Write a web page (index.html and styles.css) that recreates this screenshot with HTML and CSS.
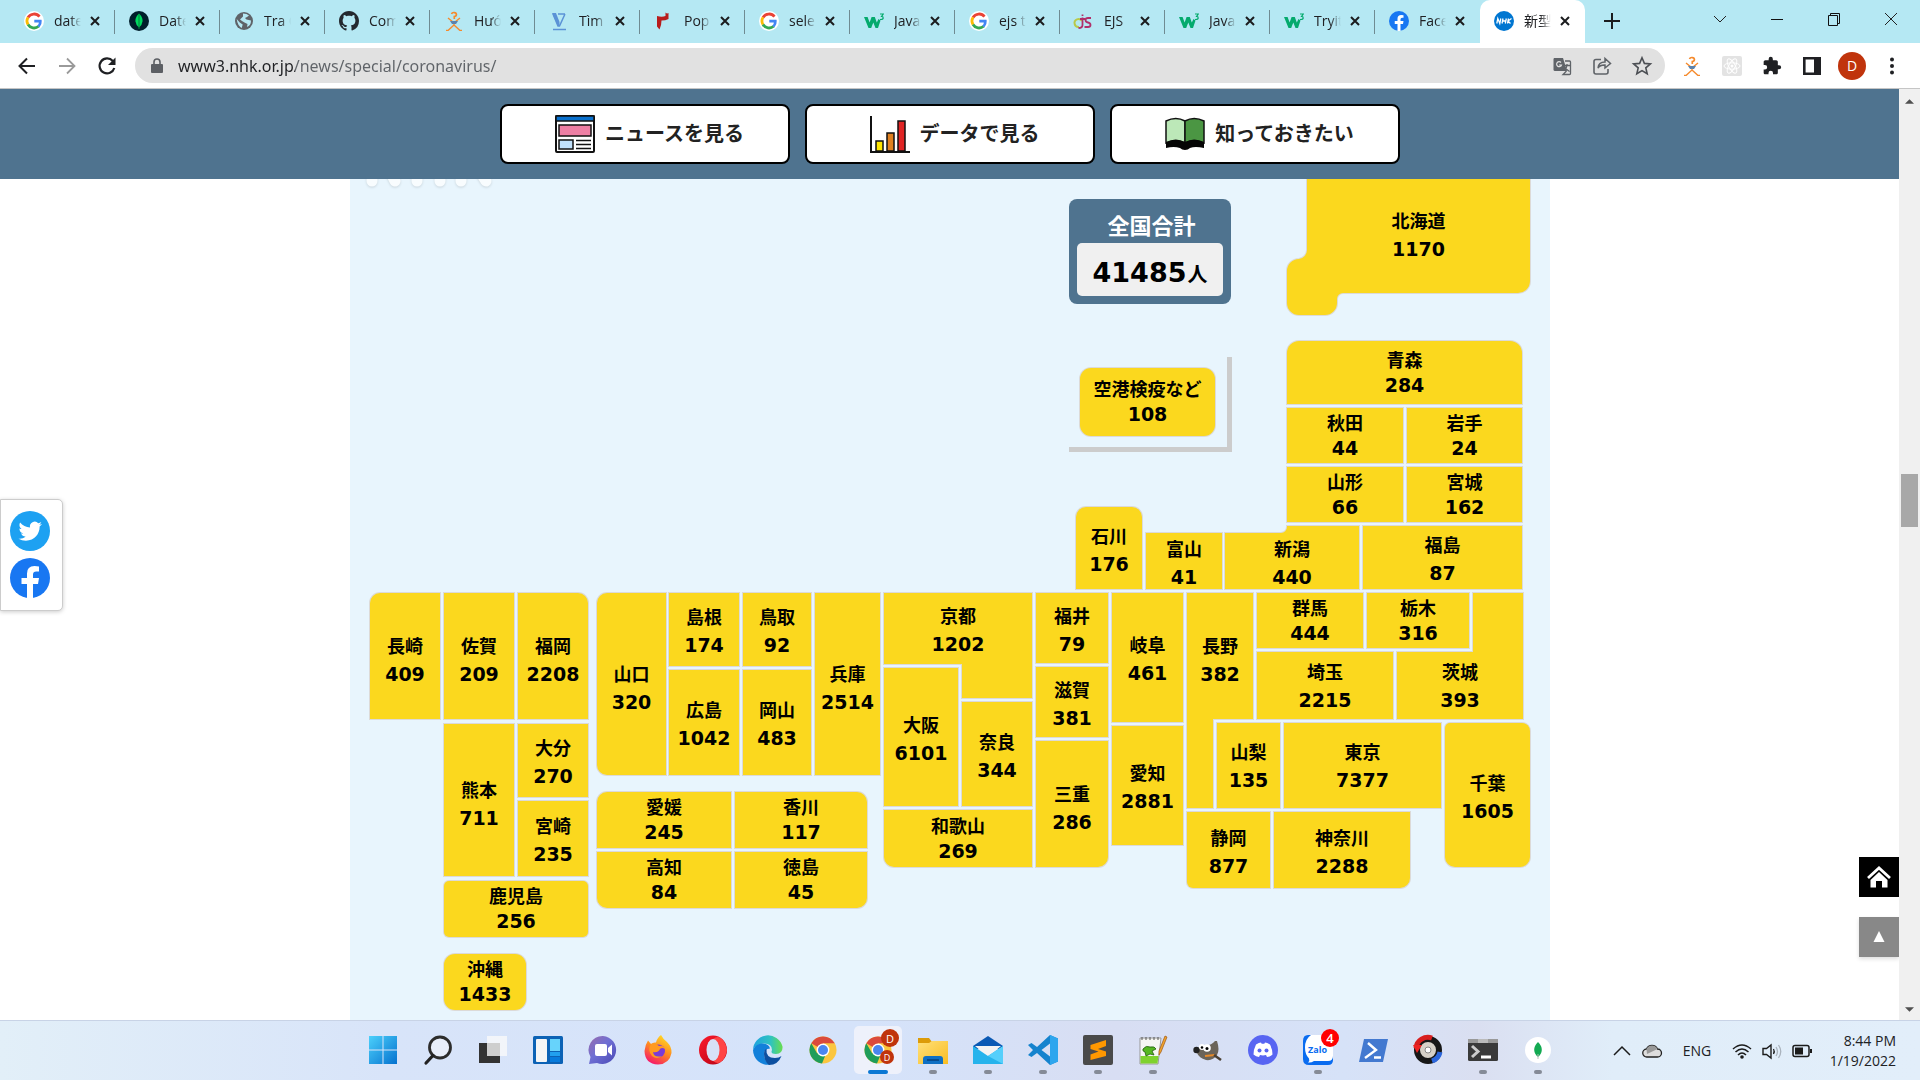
FILE: index.html
```html
<!DOCTYPE html>
<html lang="ja">
<head>
<meta charset="utf-8">
<title>新型コロナウイルス</title>
<meta name="viewport" content="width=device-width, initial-scale=1">
<link rel="stylesheet" href="styles.css">
</head>
<body>
<svg class="defs" aria-hidden="true">
  <defs>
    <linearGradient id="g-win" x1="0" y1="0" x2="1" y2="1"><stop offset="0" stop-color="#4cd0fb"/><stop offset="1" stop-color="#0572cf"/></linearGradient>
    <linearGradient id="g-edge" x1="0" y1="0" x2="1" y2="0"><stop offset="0" stop-color="#1fa2e0"/><stop offset=".6" stop-color="#2fc3c0"/><stop offset="1" stop-color="#68dd4e"/></linearGradient>
    <linearGradient id="g-fox" x1=".8" y1="0" x2=".3" y2="1"><stop offset="0" stop-color="#ffe226"/><stop offset=".5" stop-color="#ff8a1f"/><stop offset="1" stop-color="#f5156c"/></linearGradient>
    <linearGradient id="g-chat" x1="0" y1="0" x2="1" y2="1"><stop offset="0" stop-color="#9a6cab"/><stop offset=".45" stop-color="#6f6fd4"/><stop offset="1" stop-color="#4a49b5"/></linearGradient>
    <linearGradient id="g-folder" x1="0" y1="0" x2="1" y2="1"><stop offset="0" stop-color="#ffe07a"/><stop offset="1" stop-color="#f9bd22"/></linearGradient>
    <linearGradient id="g-opera" x1="0" y1="0" x2="1" y2="1"><stop offset="0" stop-color="#ff1b2d"/><stop offset="1" stop-color="#b00012"/></linearGradient>
    <symbol id="close" viewBox="0 0 12 12"><path d="M2 2l8 8M10 2l-8 8" stroke="#1b1c1e" stroke-width="2" fill="none"/></symbol>
    <symbol id="google" viewBox="0 0 20 20"><circle cx="10" cy="10" r="10" fill="#fff"/><path d="M15.500 5.600A7 7 0 0 0 4 6.500" stroke="#ea4335" stroke-width="2.800" fill="none"/><path d="M4 6.400a7 7 0 0 0 0 7.200" stroke="#fbbc05" stroke-width="2.800" fill="none"/><path d="M4 13.500a7 7 0 0 0 10.600 1.800" stroke="#34a853" stroke-width="2.800" fill="none"/><path d="M14.400 15.400A6.500 6.500 0 0 0 16.300 10.100H10.300" stroke="#4285f4" stroke-width="2.800" fill="none"/></symbol>
    <symbol id="w3" viewBox="0 0 20 20"><path d="M0 6h3.600l2 5.500L7.600 6h3.200l2 5.500L14.500 8l2 1.500-2.500 7.500h-2.500L9.300 11.500 7.200 17H4.500z" fill="#04aa6d"/><path d="M16 3h3.200l-1.600 2.300q1.600 0 1.600 1.600T16 8.500" stroke="#04aa6d" stroke-width="1.200" fill="none"/></symbol>
    <symbol id="stick" viewBox="0 0 20 20"><path d="M7.500 3a2.500 2 0 1 1 2.800 2.500V8" stroke="#f58a2c" stroke-width="1.700" fill="none"/><path d="M4 7l5 4h2l5-4M10 11v3l-6 5.500H2M10 14l6 5.500h2" stroke="#f58a2c" stroke-width="1.400" fill="none"/><path d="M6 10h8l-2 3H8z" fill="#5b83ad"/></symbol>
    <symbol id="fb" viewBox="0 0 40 40"><circle cx="20" cy="20" r="20" fill="#1877f2"/><path d="M17 40V26h-5.500v-6H17v-4.500Q17 8 24.500 8q2.500 0 4.500.4v5h-2.800Q23 13.400 23 16.500V20h6l-1 6h-5v14z" fill="#fff"/></symbol>
    <symbol id="chrome" viewBox="0 0 30 30"><circle cx="15" cy="15" r="13.500" fill="#fbc63f"/><path d="M15 15L3.300 8.200A13.500 13.500 0 0 1 26.700 8.200H15z" fill="#db4a3c"/><path d="M3.300 8.200L9.200 18.400 15 15l2 6.200-3 7.300A13.500 13.500 0 0 1 3.300 8.200z" fill="#1f9d5a"/><circle cx="15" cy="15" r="6.400" fill="#fff"/><circle cx="15" cy="15" r="5" fill="#4a86f0"/></symbol>
  </defs>
</svg>

<header class="browser">
  <div class="tabstrip">
    <nav class="tabs" aria-label="Tabs">
      <div class="tab"><svg class="fav"><use href="#google"/></svg><a class="tab-title" href="#">date</a><button class="tab-close" aria-label="Close"><svg><use href="#close"/></svg></button></div>
      <div class="tab"><svg class="fav" viewBox="0 0 20 20"><circle cx="10" cy="10" r="10" fill="#001e2b"/><path d="M10 2.500q4 4 3.500 8-.5 4-3.500 6-3-2-3.500-6-.5-4 3.500-8z" fill="#00d95f"/><path d="M10 3v15" stroke="#00833a"/></svg><a class="tab-title" href="#">Date</a><button class="tab-close" aria-label="Close"><svg><use href="#close"/></svg></button></div>
      <div class="tab"><svg class="fav" viewBox="0 0 20 20"><circle cx="10" cy="10" r="9" fill="#5f6368"/><path d="M9 2.500q4 0 6 2l-2 1.500-2 1 1.500 1.500 4.500 1q0 5-4 6.500l.5-3-3-1.500L8 10 6 8.500l3-3zM2.700 8l3 3.500 3 2-1 3.500Q3.500 14.500 2.700 8z" fill="#b5e8f3"/></svg><a class="tab-title" href="#">Tra C</a><button class="tab-close" aria-label="Close"><svg><use href="#close"/></svg></button></div>
      <div class="tab"><svg class="fav" viewBox="0 0 16 16"><path fill="#24292f" d="M8 0C3.580 0 0 3.580 0 8c0 3.540 2.290 6.530 5.470 7.590.4.070.55-.17.55-.38 0-.19-.01-.82-.01-1.490-2.010.37-2.530-.49-2.690-.94-.09-.23-.48-.94-.82-1.130-.28-.15-.68-.52-.01-.53.63-.01 1.080.58 1.230.82.72 1.210 1.870.87 2.330.66.070-.52.28-.87.51-1.070-1.780-.2-3.640-.89-3.640-3.950 0-.87.31-1.590.82-2.150-.08-.2-.36-1.020.08-2.120 0 0 .67-.21 2.200.82.64-.18 1.320-.27 2-.27s1.360.09 2 .27c1.530-1.040 2.200-.82 2.200-.82.44 1.100.16 1.920.08 2.120.51.56.82 1.270.82 2.150 0 3.070-1.870 3.750-3.650 3.950.29.25.54.73.54 1.480 0 1.070-.01 1.930-.01 2.200 0 .21.15.46.55.38A8.010 8.010 0 0 0 16 8c0-4.420-3.580-8-8-8z"/></svg><a class="tab-title" href="#">Com</a><button class="tab-close" aria-label="Close"><svg><use href="#close"/></svg></button></div>
      <div class="tab"><svg class="fav"><use href="#stick"/></svg><a class="tab-title" href="#">Hướ</a><button class="tab-close" aria-label="Close"><svg><use href="#close"/></svg></button></div>
      <div class="tab"><svg class="fav" viewBox="0 0 20 20"><path d="M4 3l5 12h1.500L16 3M9 3h7M4 18.500h13" stroke="#5b92d6" stroke-width="1.500" fill="none"/><path d="M3 2h4l3.500 9v4H9z" fill="#5b92d6"/></svg><a class="tab-title" href="#">Tìm</a><button class="tab-close" aria-label="Close"><svg><use href="#close"/></svg></button></div>
      <div class="tab"><svg class="fav" viewBox="0 0 20 20"><path d="M3 5q5 1.500 8.500 0V1.500q1.500 1.500 3 .5v6q-3 1.500-7 1.500 0 5-2 9L3 15.500z" fill="#b81c1c"/></svg><a class="tab-title" href="#">Pop</a><button class="tab-close" aria-label="Close"><svg><use href="#close"/></svg></button></div>
      <div class="tab"><svg class="fav"><use href="#google"/></svg><a class="tab-title" href="#">sele</a><button class="tab-close" aria-label="Close"><svg><use href="#close"/></svg></button></div>
      <div class="tab"><svg class="fav"><use href="#w3"/></svg><a class="tab-title" href="#">Java</a><button class="tab-close" aria-label="Close"><svg><use href="#close"/></svg></button></div>
      <div class="tab"><svg class="fav"><use href="#google"/></svg><a class="tab-title" href="#">ejs t</a><button class="tab-close" aria-label="Close"><svg><use href="#close"/></svg></button></div>
      <div class="tab"><svg class="fav" viewBox="0 0 20 20"><path d="M8 10a4 4 0 1 0-3 6" stroke="#b9c94a" stroke-width="2" fill="none"/><path d="M8.500 3.500v1.500M8.500 6.500V14q0 3-4 3M17 7h-3q-2.500 0-2.500 2t2.500 2.500 2.500 2.500-2.500 2h-3.500M6 8h5" stroke="#b0306a" stroke-width="1.800" fill="none"/></svg><a class="tab-title" href="#">EJS</a><button class="tab-close" aria-label="Close"><svg><use href="#close"/></svg></button></div>
      <div class="tab"><svg class="fav"><use href="#w3"/></svg><a class="tab-title" href="#">Java</a><button class="tab-close" aria-label="Close"><svg><use href="#close"/></svg></button></div>
      <div class="tab"><svg class="fav"><use href="#w3"/></svg><a class="tab-title" href="#">Tryit</a><button class="tab-close" aria-label="Close"><svg><use href="#close"/></svg></button></div>
      <div class="tab before-active"><svg class="fav"><use href="#fb"/></svg><a class="tab-title" href="#">Face</a><button class="tab-close" aria-label="Close"><svg><use href="#close"/></svg></button></div>
      <div class="tab active"><svg class="fav" viewBox="0 0 20 20"><circle cx="10" cy="10" r="10" fill="#0076d1"/><path d="M2.800 12.500l1-5 2 5 1-5M8 12.500l1-5M11.300 12.500l1-5M8.500 10h3.200M13.500 12.500l1-5M17.500 7.500L14 10l2.500 2.500" stroke="#fff" stroke-width="1.300" fill="none"/></svg><a class="tab-title" href="#" aria-current="page">新型</a><button class="tab-close" aria-label="Close"><svg><use href="#close"/></svg></button></div>
      <button class="new-tab" aria-label="New tab"><svg viewBox="0 0 16 16"><path d="M8 0v16M0 8h16" stroke="#1b1c1e" stroke-width="2"/></svg></button>
    </nav>
    <div class="window-controls">
      <button aria-label="Search tabs"><svg viewBox="0 0 14 14"><path d="M1 4l6 6 6-6" stroke="#222" fill="none"/></svg></button>
      <button aria-label="Minimize"><svg viewBox="0 0 14 14"><path d="M1 7.500h12" stroke="#111"/></svg></button>
      <button aria-label="Restore"><svg viewBox="0 0 14 14"><path d="M1.500 3.500h9v10h-9zM3.500 3.500v-2h9v10h-2" stroke="#111" fill="none"/></svg></button>
      <button aria-label="Close window"><svg viewBox="0 0 14 14"><path d="M1 1l12 12M13 1L1 13" stroke="#222"/></svg></button>
    </div>
  </div>
  <div class="toolbar">
    <button class="tool" aria-label="Back"><svg viewBox="0 0 20 20"><path d="M18 10H3M10 2.500L2.500 10l7.500 7.500" stroke="#1f2023" stroke-width="2" fill="none"/></svg></button>
    <button class="tool" aria-label="Forward"><svg viewBox="0 0 20 20"><path d="M2 10h15M10 2.500l7.500 7.500-7.500 7.500" stroke="#9a9a9a" stroke-width="1.800" fill="none"/></svg></button>
    <button class="tool" aria-label="Reload"><svg viewBox="0 0 20 20"><path d="M15.800 5A7.500 7.500 0 1 0 17.300 12" stroke="#1f2023" stroke-width="2.200" fill="none"/><path d="M18.500 1.500v7.500H11z" fill="#1f2023"/></svg></button>
    <div class="omnibox">
      <svg class="lock" viewBox="0 0 12 16"><rect x="0" y="6" width="12" height="9" rx="1" fill="#5c5f64"/><path d="M3 6V4a3 3 0 0 1 6 0v2" stroke="#5c5f64" stroke-width="1.600" fill="none"/></svg>
      <input class="url" type="text" aria-label="Address" value="www3.nhk.or.jp/news/special/coronavirus/">
      <button class="tool" aria-label="Translate"><svg viewBox="0 0 20 20"><path d="M2 2h9l4 13H3q-1.500 0-1.500-1.500V3z" fill="#5f6368"/><path d="M13 5h4.500q1 0 1 1v11.500q0 1-1 1H11l3.500-3.500M12 9.500h6M15 8v1.500q-.5 3.500-3 5M13.500 11.500q1 2.500 4 4" stroke="#5f6368" stroke-width="1.300" fill="none"/><path d="M9 6.500a2.500 2.500 0 1 0 .5 2.500H7" stroke="#e1e1e1" stroke-width="1.200" fill="none"/></svg></button>
      <button class="tool" aria-label="Share"><svg viewBox="0 0 20 20"><path d="M9 3.500H4q-2 0-2 2V16q0 2 2 2h10q2 0 2-2v-3" stroke="#5f6368" stroke-width="1.600" fill="none"/><path d="M6 12q.5-6 7-6V2.500L18.500 7.500 13 12V9q-5-.2-7 3z" stroke="#5f6368" stroke-width="1.500" fill="none"/></svg></button>
      <button class="tool" aria-label="Bookmark"><svg viewBox="0 0 20 20"><path d="M10 1.800l2.400 5.600 6 .5-4.600 4 1.400 5.900L10 14.600l-5.200 3.200 1.400-5.900-4.600-4 6-.5z" stroke="#4c4f54" stroke-width="1.600" fill="none"/></svg></button>
    </div>
    <div class="extensions">
      <button class="tool" aria-label="Extension"><svg><use href="#stick"/></svg></button>
      <button class="tool" aria-label="React tools"><svg viewBox="0 0 20 20"><rect width="20" height="20" rx="2" fill="#e3e3e3"/><g stroke="#fff" fill="none"><ellipse cx="10" cy="10" rx="8" ry="3.200"/><ellipse cx="10" cy="10" rx="8" ry="3.200" transform="rotate(60 10 10)"/><ellipse cx="10" cy="10" rx="8" ry="3.200" transform="rotate(120 10 10)"/></g><circle cx="10" cy="10" r="1.500" fill="#fff"/></svg></button>
      <button class="tool" aria-label="Extensions"><svg viewBox="0 0 24 24"><path fill="#1f2023" d="M20.500 11H19V7c0-1.100-.9-2-2-2h-4V3.500a2.500 2.500 0 0 0-5 0V5H4c-1.100 0-2 .9-2 2v3.800h1.500a2.700 2.700 0 0 1 0 5.400H2V20c0 1.100.9 2 2 2h3.800v-1.500a2.700 2.700 0 0 1 5.400 0V22H17c1.100 0 2-.9 2-2v-4h1.500a2.500 2.500 0 0 0 0-5z"/></svg></button>
      <button class="tool" aria-label="Side panel"><svg viewBox="0 0 20 20"><path d="M2.300 2.300h15.400v15.400H2.300z" stroke="#1f2023" stroke-width="2.600" fill="none"/><path d="M12 2h6v16h-6z" fill="#1f2023"/></svg></button>
      <button class="avatar">D</button>
      <button class="tool" aria-label="Menu"><svg viewBox="0 0 20 20"><circle cx="10" cy="3.500" r="2" fill="#1f2023"/><circle cx="10" cy="10" r="2" fill="#1f2023"/><circle cx="10" cy="16.500" r="2" fill="#1f2023"/></svg></button>
    </div>
  </div>
</header>

<div class="window">
  <div class="page">
    <nav class="site-nav">
      <a class="nav-button" href="#"><svg viewBox="0 0 40 38"><rect x="1" y="1" width="38" height="36" rx="1" fill="#fff" stroke="#111" stroke-width="2"/><path d="M1 1h38v5H1z" fill="#0a71ce" stroke="#111" stroke-width="1.500"/><rect x="4" y="10" width="32" height="11" fill="#ee7fa4" stroke="#111" stroke-width="1.500"/><rect x="4" y="25" width="14" height="9" fill="#bfe0fb" stroke="#111" stroke-width="1.500"/><path d="M21 25.500h15M21 29.500h15M21 33.500h15" stroke="#111" stroke-width="1.500"/></svg>ニュースを見る</a>
      <a class="nav-button" href="#"><svg viewBox="0 0 40 38"><path d="M1 1v36h39" stroke="#111" stroke-width="2" fill="none"/><rect x="6" y="26" width="7" height="10" fill="#ffe600" stroke="#111" stroke-width="1.500"/><rect x="17" y="18" width="7" height="18" fill="#e08020" stroke="#111" stroke-width="1.500"/><rect x="28" y="6" width="7" height="30" fill="#e02424" stroke="#111" stroke-width="1.500"/></svg>データで見る</a>
      <a class="nav-button" href="#"><svg viewBox="0 0 40 38"><path d="M1 6q10-5 19 0v22q-9-4-19 0z" fill="#bce8b8" stroke="#111" stroke-width="1.500"/><path d="M39 6q-10-5-19 0v22q9-4 19 0z" fill="#4b9643" stroke="#111" stroke-width="1.500"/><path d="M1 27q10-5 19 0 9-5 19 0v6q-9-2-14 0-2 2-5 2t-5-2q-6-2-14 0z" fill="#050505"/></svg>知っておきたい</a>
    </nav>
    <main class="map">
      <svg class="map-shapes" viewBox="0 0 1200 841" aria-hidden="true">
        <g class="watermark"><path d="M22 -8V2M40 -8l5 10M67 -8V2M90 -8V2M111 -8V2M131 -6l5 8"/></g>
        <g class="land">
          <path d="M957 -10V71a9 9 0 0 1-8 9a12 12 0 0 0-12 12v32a12 12 0 0 0 12 12h26a12 12 0 0 0 12-12v-4a6 6 0 0 1 6-6h175a12 12 0 0 0 12-12V-10z"/>
          <path d="M534 414h148v105h-70v-34h-78z"/>
          <path d="M837 414h66v126h-40v89h-26z"/>
          <path d="M1123 414h50v126h-126v-67h76z"/>
          <path d="M875 354h56a6 6 0 0 0 6-6v-1h72v63H875z"/>
        </g>
      </svg>
      <section class="total"><h2>全国合計</h2><p><strong>41485</strong>人</p></section>
      <div class="bracket"></div>
      <a href="#" class="tile low airport"><span>空港検疫など</span><b>108</b></a>
      <a href="#" class="tile shape hokkaido"><span>北海道</span><b>1170</b></a>
      <a href="#" class="tile low aomori"><span>青森</span><b>284</b></a>
      <a href="#" class="tile low akita"><span>秋田</span><b>44</b></a>
      <a href="#" class="tile low iwate"><span>岩手</span><b>24</b></a>
      <a href="#" class="tile low yamagata"><span>山形</span><b>66</b></a>
      <a href="#" class="tile low miyagi"><span>宮城</span><b>162</b></a>
      <a href="#" class="tile ishikawa"><span>石川</span><b>176</b></a>
      <a href="#" class="tile toyama"><span>富山</span><b>41</b></a>
      <a href="#" class="tile shape niigata"><span>新潟</span><b>440</b></a>
      <a href="#" class="tile fukushima"><span>福島</span><b>87</b></a>
      <a href="#" class="tile west nagasaki"><span>長崎</span><b>409</b></a>
      <a href="#" class="tile west saga"><span>佐賀</span><b>209</b></a>
      <a href="#" class="tile west fukuoka"><span>福岡</span><b>2208</b></a>
      <a href="#" class="tile west kumamoto"><span>熊本</span><b>711</b></a>
      <a href="#" class="tile oita"><span>大分</span><b>270</b></a>
      <a href="#" class="tile miyazaki"><span>宮崎</span><b>235</b></a>
      <a href="#" class="tile low kagoshima"><span>鹿児島</span><b>256</b></a>
      <a href="#" class="tile low okinawa"><span>沖縄</span><b>1433</b></a>
      <a href="#" class="tile west yamaguchi"><span>山口</span><b>320</b></a>
      <a href="#" class="tile shimane"><span>島根</span><b>174</b></a>
      <a href="#" class="tile tottori"><span>鳥取</span><b>92</b></a>
      <a href="#" class="tile hiroshima"><span>広島</span><b>1042</b></a>
      <a href="#" class="tile okayama"><span>岡山</span><b>483</b></a>
      <a href="#" class="tile west hyogo"><span>兵庫</span><b>2514</b></a>
      <a href="#" class="tile low ehime"><span>愛媛</span><b>245</b></a>
      <a href="#" class="tile low kagawa"><span>香川</span><b>117</b></a>
      <a href="#" class="tile low kochi"><span>高知</span><b>84</b></a>
      <a href="#" class="tile low tokushima"><span>徳島</span><b>45</b></a>
      <a href="#" class="tile shape kyoto"><span>京都</span><b>1202</b></a>
      <a href="#" class="tile osaka"><span>大阪</span><b>6101</b></a>
      <a href="#" class="tile nara"><span>奈良</span><b>344</b></a>
      <a href="#" class="tile low wakayama"><span>和歌山</span><b>269</b></a>
      <a href="#" class="tile fukui"><span>福井</span><b>79</b></a>
      <a href="#" class="tile shiga"><span>滋賀</span><b>381</b></a>
      <a href="#" class="tile west mie"><span>三重</span><b>286</b></a>
      <a href="#" class="tile gifu"><span>岐阜</span><b>461</b></a>
      <a href="#" class="tile aichi"><span>愛知</span><b>2881</b></a>
      <a href="#" class="tile shape west nagano"><span>長野</span><b>382</b></a>
      <a href="#" class="tile low gunma"><span>群馬</span><b>444</b></a>
      <a href="#" class="tile low tochigi"><span>栃木</span><b>316</b></a>
      <a href="#" class="tile flat saitama"><span>埼玉</span><b>2215</b></a>
      <a href="#" class="tile flat shape ibaraki"><span>茨城</span><b>393</b></a>
      <a href="#" class="tile flat yamanashi"><span>山梨</span><b>135</b></a>
      <a href="#" class="tile flat tokyo"><span>東京</span><b>7377</b></a>
      <a href="#" class="tile chiba"><span>千葉</span><b>1605</b></a>
      <a href="#" class="tile shizuoka"><span>静岡</span><b>877</b></a>
      <a href="#" class="tile kanagawa"><span>神奈川</span><b>2288</b></a>
    </main>
    <aside class="share">
      <a href="#" aria-label="Twitter"><svg viewBox="0 0 40 40"><circle cx="20" cy="20" r="20" fill="#1da1f2"/><path fill="#fff" transform="translate(8.500 8.500) scale(.98)" d="M23.950 4.570a10 10 0 0 1-2.820.780 4.960 4.960 0 0 0 2.160-2.730 9.900 9.900 0 0 1-3.120 1.190 4.920 4.920 0 0 0-8.380 4.480C7.690 8.090 4.070 6.130 1.640 3.160a4.820 4.820 0 0 0-.67 2.480c0 1.710.87 3.210 2.190 4.100a4.900 4.900 0 0 1-2.230-.62v.06a4.920 4.920 0 0 0 3.950 4.830 5 5 0 0 1-2.210.08 4.940 4.940 0 0 0 4.600 3.420A9.870 9.870 0 0 1 0 19.540a14 14 0 0 0 7.550 2.210c9.050 0 14-7.500 14-13.980 0-.21 0-.42-.02-.63a9.940 9.940 0 0 0 2.460-2.550z"/></svg></a>
      <a href="#" aria-label="Facebook"><svg><use href="#fb"/></svg></a>
    </aside>
    <div class="jump">
      <a class="home" href="#" aria-label="Home"><svg viewBox="0 0 24 22"><path d="M1 12L12 2l11 10" stroke="#fff" stroke-width="2.800" fill="none"/><path d="M12 6l8.500 8v7.500h-5.500V15H9v6.500H3.500V14z" fill="#fff"/></svg></a>
      <a class="top" href="#" aria-label="Top"><svg viewBox="0 0 24 22"><path d="M12 5l5.500 11h-11z" fill="#fff"/></svg></a>
    </div>
  </div>
  <div class="scrollbar">
    <svg viewBox="0 0 10 6"><path d="M0 6l5-5 5 5z" fill="#505050"/></svg>
    <span class="thumb"></span>
    <svg viewBox="0 0 10 6"><path d="M0 0l5 5 5-5z" fill="#505050"/></svg>
  </div>
</div>

<footer class="taskbar">
  <div class="apps">
    <button class="app" aria-label="Start"><svg viewBox="0 0 30 30"><path d="M1 1h13.500v13.500H1zM15.500 1H29v13.500H15.500zM1 15.500h13.500V29H1zM15.500 15.500H29V29H15.500z" fill="url(#g-win)"/></svg></button>
    <button class="app" aria-label="Search"><svg viewBox="0 0 30 30"><circle cx="17" cy="12.500" r="10.500" stroke="#2c2c2c" stroke-width="2.800" fill="#e8eefa"/><path d="M10 20.500L3 28" stroke="#222" stroke-width="3.200" stroke-linecap="round"/></svg></button>
    <button class="app" aria-label="Task view"><svg viewBox="0 0 30 30"><path d="M1 8h21v20H1z" fill="#333"/><path d="M9 1h20v20H9z" fill="#fafafa" opacity=".78"/></svg></button>
    <button class="app" aria-label="Widgets"><svg viewBox="0 0 30 30"><rect y="1" width="30" height="28" rx="1.500" fill="#0c62b5"/><rect x="3" y="4" width="11" height="23" rx="1" fill="#f5f5f5"/><rect x="17" y="4" width="10" height="12" fill="#67d3fb"/><path d="M17 17h10v4H17z" fill="#21a0ef"/><path d="M17 22h10v5H17z" fill="#087bdc"/></svg></button>
    <button class="app" aria-label="Chat"><svg viewBox="0 0 30 30"><path d="M15 1a14 14 0 1 1-6 27l-8 1 1.500-7A14 14 0 0 1 15 1z" fill="url(#g-chat)"/><rect x="7" y="9" width="12" height="12" rx="2" fill="#fff"/><path d="M20 13l4-3.500v11L20 17z" fill="#fff"/></svg></button>
    <button class="app" aria-label="Firefox"><svg viewBox="0 0 30 30"><path d="M18 0q2 4 6 7 5 5 4.500 11-2 11-13.500 11.500Q2 29 1.500 16 2 10 5 5.500L8 9q2-2 5-1.500Q14 3 18 0z" fill="url(#g-fox)"/><circle cx="15.500" cy="16" r="6.500" fill="#7a3bd8"/><path d="M8 9q5-1 8 2 5-1 6 3-3-2-5 0-2 4-7 3 1 6 9 4-5 4-10 0-5-6-1-12z" fill="#ff9a20"/></svg></button>
    <button class="app" aria-label="Opera"><svg viewBox="0 0 30 30"><ellipse cx="15" cy="15" rx="14" ry="14.500" fill="url(#g-opera)"/><path d="M15 4q5-4 9 0 4 4 5 11-1 7-5 11-4 4-9 0z" fill="#f44"/><ellipse cx="15" cy="15" rx="6.500" ry="11" fill="#d7e1f7"/></svg></button>
    <button class="app" aria-label="Edge"><svg viewBox="0 0 30 30"><path d="M0 15A15 15 0 0 1 29.500 11.500q.5 7-6.500 7.500-6 0-4-4 0-7-9-6.500Q2 10 0 15z" fill="url(#g-edge)"/><path d="M0 15Q3 8 10 8.500q6 .5 7 5-6 0-6 6 0 6 6 10.200A15 15 0 0 1 0 15z" fill="#1280da"/><path d="M11 19q0-4 2.500-5.500-1 9.500 8.500 9.500 4 0 6.500-2Q25 30 16 30q-5-4-5-11z" fill="#0c4fa0"/></svg></button>
    <button class="app" aria-label="Chrome"><svg><use href="#chrome"/></svg></button>
    <button class="app current" aria-label="Chrome profile"><svg><use href="#chrome"/></svg><span class="profile big">D</span><span class="profile small">D</span></button>
    <button class="app running" aria-label="Explorer"><svg viewBox="0 0 30 30"><path d="M0 3h11l3 4-3 5H0z" fill="#dc9b08"/><path d="M0 8h11l3-2h16v23H0z" fill="url(#g-folder)"/><path d="M5 29v-5q0-3 3-3h14q3 0 3 3v5z" fill="#0f70c4"/><path d="M9 25h12" stroke="#06417c" stroke-width="1.500"/></svg></button>
    <button class="app running" aria-label="Mail"><svg viewBox="0 0 30 30"><path d="M0 11L15 1l15 10v3H0z" fill="#0a59b4"/><path d="M2 11h26L15 22z" fill="#f3f3f3"/><path d="M0 11l15 10 15-10v18H0z" fill="#26b3ec"/><path d="M15 21l15-10v18z" fill="#55cffb"/></svg></button>
    <button class="app running" aria-label="VS Code"><svg viewBox="0 0 30 30"><path d="M22 0L9 12 3.500 8 0 10l5 5-5 5 3.500 2L9 18l13 12 8-3.500v-23zM22 8.500v13L13.500 15z" fill="#1583ce" fill-rule="evenodd"/><path d="M22 0l8 3.500v23L22 30z" fill="#2ea6ee"/></svg></button>
    <button class="app running" aria-label="Sublime Text"><svg viewBox="0 0 30 30"><rect width="30" height="30" rx="2" fill="#4a4a4a"/><path d="M7.500 10L23 5v6l-8 3 8 2.500V21L7.500 25v-5.500l8-3-8-2.500z" fill="#ff9800"/></svg></button>
    <button class="app running" aria-label="Notepad++"><svg viewBox="0 0 30 30"><path d="M2 3h21l-3 26H2z" fill="#f6f6f2" stroke="#999"/><path d="M2.500 21h18l-1 7.500h-17z" fill="#7fd22f"/><path d="M4 2v3M8 2v3M12 2v3M16 2v3M20 2v3" stroke="#555"/><path d="M5 14q3-4 7-2 5-1 6 2l-4 2 2 4-4-1-4 2-1-4q-3-1-2-3z" fill="#56b820" stroke="#225a10" stroke-width=".8"/><path d="M29 2l-6 15-2 3V16L27 1z" fill="#f2a52c" stroke="#9c5413" stroke-width=".7"/></svg></button>
    <button class="app" aria-label="GIMP"><svg viewBox="0 0 30 30"><path d="M3 13q6 1 9-2 7-1 10-5l2 0q3 9 0 14-4 6-11 5-7-2-9-7z" fill="#6b6459"/><circle cx="3.500" cy="15" r="3.200" fill="#222"/><circle cx="9" cy="12" r="3" fill="#fff"/><circle cx="14" cy="13" r="3.800" fill="#fff"/><circle cx="9" cy="12.500" r="1.300"/><circle cx="14" cy="13.500" r="1.500"/><path d="M12 21l10-1" stroke="#e58a2b" stroke-width="2"/><path d="M21 20l7 5" stroke="#4a4034" stroke-width="2.500"/></svg></button>
    <button class="app" aria-label="Discord"><svg viewBox="0 0 30 30"><circle cx="15" cy="15" r="15" fill="#5865f2"/><path d="M8 9.500q3-2 5-2l.7 1.300h2.600L17 7.500q2 0 5 2 2.500 5 2.500 10-2.500 2.300-5.500 2.500l-1-2q-3 .8-6 0l-1 2q-3-.2-5.500-2.500 0-5 2.500-10z" fill="#fff"/><circle cx="11.500" cy="15.500" r="2" fill="#5865f2"/><circle cx="18.500" cy="15.500" r="2" fill="#5865f2"/></svg></button>
    <button class="app running" aria-label="Zalo"><svg viewBox="0 0 30 30"><path d="M5 0h22q3 0 3 5v20q0 5-5 5H6q-6 0-6-6V6q0-6 5-6z" fill="#0a6cf0"/><path d="M8 0h19q3 0 3 5v16q0 5-5 5H11q-3 2-6 1.500 2-2 1-4-4-4-4-11Q2 4 8 0z" fill="#fff"/></svg><span class="zalo">Zalo</span><span class="badge">4</span></button>
    <button class="app" aria-label="PowerShell"><svg viewBox="0 0 30 30"><path d="M6 4h24l-5 23H1z" fill="#4379d0"/><path d="M10 8l8 7-11 8M16 22.500h7" stroke="#fff" stroke-width="2.400" fill="none"/></svg></button>
    <button class="app" aria-label="Converter"><svg viewBox="0 0 30 30"><circle cx="15" cy="15" r="11" stroke="#171717" stroke-width="6" fill="#d6d1c8"/><path d="M3 13a12 12 0 0 1 16-10" stroke="#d81e1e" stroke-width="5" fill="none"/><path d="M0 10h9l-5 8z" fill="#e22"/><path d="M27 17a12 12 0 0 1-8 9" stroke="#2b66dd" stroke-width="5" fill="none"/><circle cx="15" cy="15" r="3" fill="#fff" stroke="#888"/></svg></button>
    <button class="app running" aria-label="Terminal"><svg viewBox="0 0 30 30"><rect y="4" width="30" height="22" rx="1.500" fill="#3a3a3a"/><path d="M0 4h30v4H0z" fill="#999"/><path d="M10 4h10v4H10z" fill="#bbb"/><path d="M4 11l6 5.500L4 22" stroke="#ccc" stroke-width="3" fill="none"/><path d="M13 22h10" stroke="#fff" stroke-width="3"/></svg></button>
    <button class="app running" aria-label="MongoDB Compass"><svg viewBox="0 0 30 30"><circle cx="15" cy="15" r="13" fill="#fff"/><path d="M15 7q4 4 3.800 8T15 22q-3.600-3-3.800-7T15 7z" fill="#13aa52"/><path d="M15 19v5" stroke="#bbb"/></svg></button>
  </div>
  <div class="tray">
    <button aria-label="Hidden icons"><svg viewBox="0 0 20 20"><path d="M2 14l8-8 8 8" stroke="#1b1b1b" stroke-width="1.500" fill="none"/></svg></button>
    <button aria-label="OneDrive"><svg viewBox="0 0 20 20"><path d="M5 16a4 4 0 0 1-.5-8A6 6 0 0 1 15.500 8a4 4 0 0 1 0 8z" fill="#ddd" stroke="#222" stroke-width="1.300"/><path d="M4.500 8A6 6 0 0 1 15.500 8L5 13z" fill="#999"/></svg></button>
    <button class="lang">ENG</button>
    <button aria-label="Wi-Fi"><svg viewBox="0 0 20 20"><path d="M1 8q9-8 18 0M3.500 11q6.500-6 13 0M6 14q4-4 8 0" stroke="#1b1b1b" stroke-width="1.500" fill="none"/><circle cx="10" cy="16" r="1.800" fill="#1b1b1b"/></svg></button>
    <button aria-label="Volume"><svg viewBox="0 0 20 20"><path d="M1 7.500h3.500L9 4v13l-4.500-3.500H1z" stroke="#1b1b1b" stroke-width="1.400" fill="none"/><path d="M11.500 8q1.500 2.500 0 5" stroke="#1b1b1b" stroke-width="1.300" fill="none"/><path d="M14 6q3 4.500 0 9M16.500 4q4.500 6.500 0 13" stroke="#aab3bd" stroke-width="1.300" fill="none"/></svg></button>
    <button aria-label="Battery"><svg viewBox="0 0 20 20"><rect x="1" y="4.500" width="16" height="11" rx="2" stroke="#1b1b1b" stroke-width="1.500" fill="none"/><rect x="3" y="6.500" width="8" height="7" fill="#1b1b1b"/><path d="M18 8h2v4h-2z" fill="#1b1b1b"/></svg></button>
    <div class="clock"><time>8:44 PM</time><time>1/19/2022</time></div>
  </div>
</footer>
</body>
</html>
```
FILE: styles.css
```css
* { box-sizing: border-box; }
body {
  margin: 0;
  height: 100vh;
  display: flex;
  flex-direction: column;
  overflow: hidden;
  background: #fff;
  font-family: "Open Sans", "Noto Sans CJK JP", sans-serif;
  color: #202124;
}
button { border: 0; padding: 0; background: none; font: inherit; color: inherit; }
a { color: inherit; text-decoration: none; }
svg { display: block; overflow: visible; }
.defs { position: absolute; width: 0; height: 0; }

/* Browser frame */
.tabstrip { display: flex; justify-content: space-between; height: 43px; background: #b5e8f3; }
.tabs { display: flex; padding-left: 10px; min-width: 0; }
.tab {
  position: relative;
  display: flex;
  align-items: center;
  width: 105px;
  padding: 0 14px 2px 14px;
}
.tab::after { content: ""; position: absolute; right: 0; top: 10px; height: 24px; width: 1px; background: #6f8b92; }
.tab.before-active::after, .tab.active::after { display: none; }
.tab.active { background: #fff; border-radius: 10px 10px 0 0; }
.fav { width: 20px; height: 20px; flex: none; }
.tab-title {
  flex: 1;
  min-width: 0;
  margin: 0 8px 0 10px;
  overflow: hidden;
  white-space: nowrap;
  font-size: 14px;
  line-height: 22px;
  mask-image: linear-gradient(to right, #000 60%, transparent);
}
.tab-close svg { width: 12px; height: 12px; }
.new-tab { padding: 0 19px 2px; }
.new-tab svg { width: 16px; height: 16px; }
.window-controls { display: flex; padding-right: 1px; }
.window-controls button { width: 57px; display: grid; place-items: center; padding-bottom: 6px; }
.window-controls svg { width: 14px; height: 14px; }
.toolbar { display: flex; align-items: center; height: 46px; padding: 0 8px 0 7px; border-bottom: 1px solid #c5c5c5; }
.tool { width: 40px; height: 36px; display: grid; place-items: center; flex: none; }
.tool svg { width: 20px; height: 20px; }
.omnibox {
  flex: 1;
  display: flex;
  align-items: center;
  height: 35px;
  margin-left: 8px;
  padding: 0 3px 0 16px;
  border-radius: 18px;
  background: #e1e1e1;
}
.lock { width: 12px; height: 16px; flex: none; }
.url {
  flex: 1;
  min-width: 0;
  margin: 0 0 0 15px;
  padding: 0;
  border: 0;
  outline: 0;
  font-family: "Open Sans", sans-serif;
  font-size: 16px;
  color: transparent;
  background: linear-gradient(to right, #202124 117px, #5f6368 117px);
  background-clip: text;
}
.url { font-family: "Noto Sans", sans-serif; }
.extensions { display: flex; align-items: center; padding-left: 7px; }
.avatar { width: 28px; height: 28px; margin: 0 6px; border-radius: 50%; background: #c0340c; color: #fff; font-size: 14px; }

/* Page window */
.window { flex: 1; min-height: 0; display: flex; overflow: hidden; }
.page { position: relative; flex: 1; min-width: 0; overflow: hidden; }
.site-nav {
  position: relative;
  z-index: 1;
  display: flex;
  justify-content: center;
  gap: 15px;
  padding: 15px;
  background: #4f738f;
}
.nav-button {
  display: flex;
  align-items: center;
  justify-content: center;
  gap: 10px;
  width: 290px;
  height: 60px;
  padding-left: 10px;
  border: 2px solid #000;
  border-radius: 8px;
  background: #fff;
  font-size: 20px;
  line-height: 26px;
  font-weight: 600;
  color: #222;
}
.nav-button svg { width: 40px; height: 38px; }
.scrollbar {
  display: flex;
  flex-direction: column;
  align-items: center;
  justify-content: space-between;
  width: 21px;
  padding: 9px 0 7px;
  background: #f0f0f0;
}
.scrollbar svg { width: 9px; height: 6px; }
.thumb { width: 17px; height: 53px; margin-bottom: 110px; background: #a8a8a8; }

/* Case map */
.map {
  position: relative;
  width: 1200px;
  height: 841px;
  margin: 0 auto;
  margin-left: round(up, calc(50% - 600px), 1px);
  background: #e8f5fd;
}
.map-shapes { position: absolute; inset: 0; width: 1200px; height: 841px; }
.land { fill: #fbd81e; stroke: #dcdad8; stroke-width: 2px; paint-order: stroke; }
.watermark { fill: none; stroke: #f8fcfe; stroke-width: 11px; stroke-linecap: round; filter: drop-shadow(0 1px 1px #c9d5dc); }
.tile {
  position: absolute;
  display: flex;
  flex-direction: column;
  align-items: center;
  justify-content: center;
  padding-top: 3px;
  background: #fbd81e;
  box-shadow: 0 0 0 1px #dcdad8;
  color: #000;
  font-size: 18px;
  line-height: 28px;
  font-weight: 600;
  white-space: nowrap;
}
.tile b { font-family: "DejaVu Sans", sans-serif; font-size: 19px; }
.tile.west { padding-top: 7px; }
.tile.low { line-height: 25px; padding-top: 0; }
.tile.flat { padding-top: 0; }
.tile.shape { background: none; box-shadow: none; }
.total {
  position: absolute;
  left: 719px; top: 20px; width: 162px; height: 105px;
  padding: 8px;
  border-radius: 8px;
  background: #4f738f;
  text-align: center;
}
.total h2 { margin: 0; padding-left: 3px; font-size: 22px; line-height: 36px; font-weight: 700; color: #fff; }
.total p { margin: 0; height: 53px; line-height: 60px; border-radius: 5px; background: #f0f0f0; color: #000; font-size: 20px; font-weight: 600; }
.total strong { margin-right: 1px; font-family: "DejaVu Sans", sans-serif; font-size: 27px; }
.bracket { position: absolute; left: 719px; top: 178px; width: 163px; height: 95px; border: solid #ccc; border-width: 0 5px 5px 0; }

.airport { left: 730px; top: 189px; width: 135px; height: 68px; border-radius: 11px; }
.hokkaido { left: 957px; top: 0; width: 223px; height: 108px; }
.aomori { left: 937px; top: 162px; width: 235px; height: 63px; border-radius: 12px 12px 0 0; }
.akita { left: 937px; top: 229px; width: 116px; height: 55px; }
.iwate { left: 1057px; top: 229px; width: 115px; height: 55px; }
.yamagata { left: 937px; top: 288px; width: 116px; height: 55px; }
.miyagi { left: 1057px; top: 288px; width: 115px; height: 55px; }
.ishikawa { left: 726px; top: 328px; width: 66px; height: 82px; border-radius: 10px 10px 0 0; }
.toyama { left: 796px; top: 354px; width: 76px; height: 56px; }
.niigata { left: 875px; top: 354px; width: 134px; height: 56px; }
.fukushima { left: 1013px; top: 347px; width: 159px; height: 63px; }
.nagasaki { left: 20px; top: 414px; width: 70px; height: 126px; border-radius: 10px 0 0 0; }
.saga { left: 94px; top: 414px; width: 70px; height: 126px; }
.fukuoka { left: 168px; top: 414px; width: 70px; height: 126px; border-radius: 0 10px 0 0; }
.kumamoto { left: 94px; top: 545px; width: 70px; height: 152px; }
.oita { left: 168px; top: 545px; width: 70px; height: 73px; }
.miyazaki { left: 168px; top: 622px; width: 70px; height: 75px; }
.kagoshima { left: 94px; top: 702px; width: 144px; height: 56px; border-radius: 5px; }
.okinawa { left: 94px; top: 775px; width: 82px; height: 56px; border-radius: 11px; }
.yamaguchi { left: 247px; top: 414px; width: 69px; height: 182px; border-radius: 10px 0 0 10px; }
.shimane { left: 319px; top: 414px; width: 70px; height: 73px; }
.tottori { left: 393px; top: 414px; width: 68px; height: 73px; }
.hiroshima { left: 319px; top: 491px; width: 70px; height: 105px; }
.okayama { left: 393px; top: 491px; width: 68px; height: 105px; }
.hyogo { left: 465px; top: 414px; width: 65px; height: 182px; }
.ehime { left: 247px; top: 613px; width: 134px; height: 56px; border-radius: 10px 0 0 0; }
.kagawa { left: 385px; top: 613px; width: 132px; height: 56px; border-radius: 0 10px 0 0; }
.kochi { left: 247px; top: 673px; width: 134px; height: 56px; border-radius: 0 0 0 10px; }
.tokushima { left: 385px; top: 673px; width: 132px; height: 56px; border-radius: 0 0 10px 0; }
.kyoto { left: 534px; top: 414px; width: 148px; height: 71px; }
.osaka { left: 534px; top: 489px; width: 74px; height: 138px; }
.nara { left: 612px; top: 523px; width: 70px; height: 104px; }
.wakayama { left: 534px; top: 631px; width: 148px; height: 57px; border-radius: 0 0 0 10px; }
.fukui { left: 686px; top: 414px; width: 72px; height: 70px; }
.shiga { left: 686px; top: 488px; width: 72px; height: 70px; }
.mie { left: 686px; top: 562px; width: 72px; height: 126px; border-radius: 0 0 10px 0; }
.gifu { left: 762px; top: 414px; width: 71px; height: 129px; }
.aichi { left: 762px; top: 547px; width: 71px; height: 119px; }
.nagano { left: 837px; top: 414px; width: 66px; height: 126px; }
.gunma { left: 907px; top: 414px; width: 106px; height: 55px; }
.tochigi { left: 1017px; top: 414px; width: 102px; height: 55px; }
.saitama { left: 907px; top: 473px; width: 136px; height: 67px; }
.ibaraki { left: 1047px; top: 473px; width: 126px; height: 67px; }
.yamanashi { left: 867px; top: 544px; width: 63px; height: 85px; }
.tokyo { left: 934px; top: 544px; width: 157px; height: 85px; }
.chiba { left: 1095px; top: 544px; width: 85px; height: 144px; border-radius: 5px 8px 10px 10px; }
.shizuoka { left: 837px; top: 633px; width: 83px; height: 76px; border-radius: 0 0 0 6px; }
.kanagawa { left: 924px; top: 633px; width: 136px; height: 76px; border-radius: 0 0 10px 0; }

/* Floating links */
.share {
  position: absolute;
  left: 0;
  top: 410px;
  display: grid;
  gap: 7px;
  padding: 11px 12px 12px 9px;
  border: 1px solid #ccc;
  border-radius: 0 5px 5px 0;
  background: #fff;
  box-shadow: 0 1px 4px #ccc;
}
.share svg { width: 40px; height: 40px; }
.jump { position: absolute; right: 0; bottom: 63px; display: grid; gap: 20px; }
.jump a { width: 40px; height: 40px; display: grid; place-items: center; background: #000; }
.jump svg { width: 24px; height: 22px; }
.jump .top { background: #888; box-shadow: 0 2px 4px #ddd; }

/* Taskbar */
.taskbar {
  display: grid;
  grid-template-columns: 1fr auto 1fr;
  height: 60px;
  border-top: 1px solid #c8d3e6;
  background: linear-gradient(to right, #e2eff8, #d8e4f9 20%, #d5e3fa 45%, #d8def3 58%, #d6e2f8 70%, #dadff1 77%, #e0edf9 84%, #e2eefa);
}
.apps { grid-column: 2; display: flex; gap: 7px; padding: 5px 0 0 1px; }
.app { position: relative; width: 48px; height: 48px; display: grid; place-items: center; border-radius: 5px; }
.app svg { width: 30px; height: 30px; }
.app.current { background: #eef1fb; }
.app.current::after, .app.running::after {
  content: "";
  position: absolute;
  left: 50%;
  bottom: 0;
  width: 8px;
  height: 4px;
  margin-left: -4px;
  border-radius: 2px;
  background: #858b97;
}
.app.current::after { width: 20px; margin-left: -10px; background: #0a78d4; }
.profile, .badge {
  position: absolute;
  display: grid;
  place-items: center;
  width: 18px;
  height: 18px;
  right: 3px;
  top: 3px;
  border-radius: 50%;
  background: #c0340c;
  color: #fff;
  font-size: 11px;
}
.profile.small { width: 14px; height: 14px; right: 8px; top: 24px; font-size: 9px; }
.badge { background: #f00; font-size: 13px; font-weight: 600; }
.zalo { position: absolute; left: 14px; top: 17px; font-size: 9px; line-height: 14px; font-weight: 700; color: #0a6cf0; }
.tray { display: flex; align-items: center; justify-content: flex-end; padding-right: 24px; font-size: 14px; }
.tray button { width: 30px; display: grid; place-items: center; }
.tray .lang { width: 60px; }
.tray svg { width: 20px; height: 20px; }
.clock { display: grid; width: 79px; text-align: right; line-height: 20px; }
```
